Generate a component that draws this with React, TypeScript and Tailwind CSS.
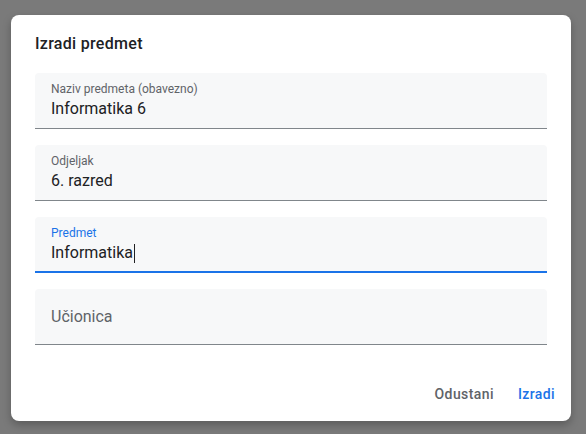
export default function App() {
  const fields = [
    { label: "Naziv predmeta (obavezno)", value: "Informatika 6" },
    { label: "Odjeljak", value: "6. razred" },
  ];

  return (
    <div className="w-full h-[434px] bg-[#7a7a7a] pt-[15px] pl-[11px] font-['Roboto',sans-serif]">
      <div className="w-[560px] h-[406px] bg-white rounded-lg shadow-[0_4px_8px_rgba(0,0,0,0.25)] flex flex-col">
        <h1 className="px-6 pt-[17px] text-[16px] leading-6 font-medium text-[#202124] tracking-[0.3px]">
          Izradi predmet
        </h1>

        <div className="px-6 mt-[17px] flex flex-col gap-4">
          {fields.map((f) => (
            <div key={f.label} className="h-14 bg-[#f7f8f9] rounded-t border-b border-[#80868b] px-4 pt-2">
              <p className="text-[12px] leading-4 text-[#5f6368]">{f.label}</p>
              <p className="text-[16px] leading-6 text-[#202124]">{f.value}</p>
            </div>
          ))}

          {/* focused field */}
          <div className="h-14 bg-[#f7f8f9] rounded-t border-b-2 border-[#1a73e8] px-4 pt-2">
            <p className="text-[12px] leading-4 text-[#1a73e8]">Predmet</p>
            <p className="text-[16px] leading-6 text-[#202124] flex items-center">
              Informatika
              <span className="inline-block w-px h-[19px] bg-[#202124] ml-px" />
            </p>
          </div>

          <div className="h-14 bg-[#f7f8f9] rounded-t border-b border-[#80868b] px-4 flex items-center">
            <p className="text-[16px] leading-6 text-[#5f6368]">Učionica</p>
          </div>
        </div>

        <div className="mt-[31px] pr-2 flex justify-end gap-2">
          <button className="h-9 px-2 text-[14px] font-medium text-[#5f6368] tracking-[0.4px]">Odustani</button>
          <button className="h-9 px-2 text-[14px] font-medium text-[#1a73e8] tracking-[0.4px]">Izradi</button>
        </div>
      </div>
    </div>
  );
}
